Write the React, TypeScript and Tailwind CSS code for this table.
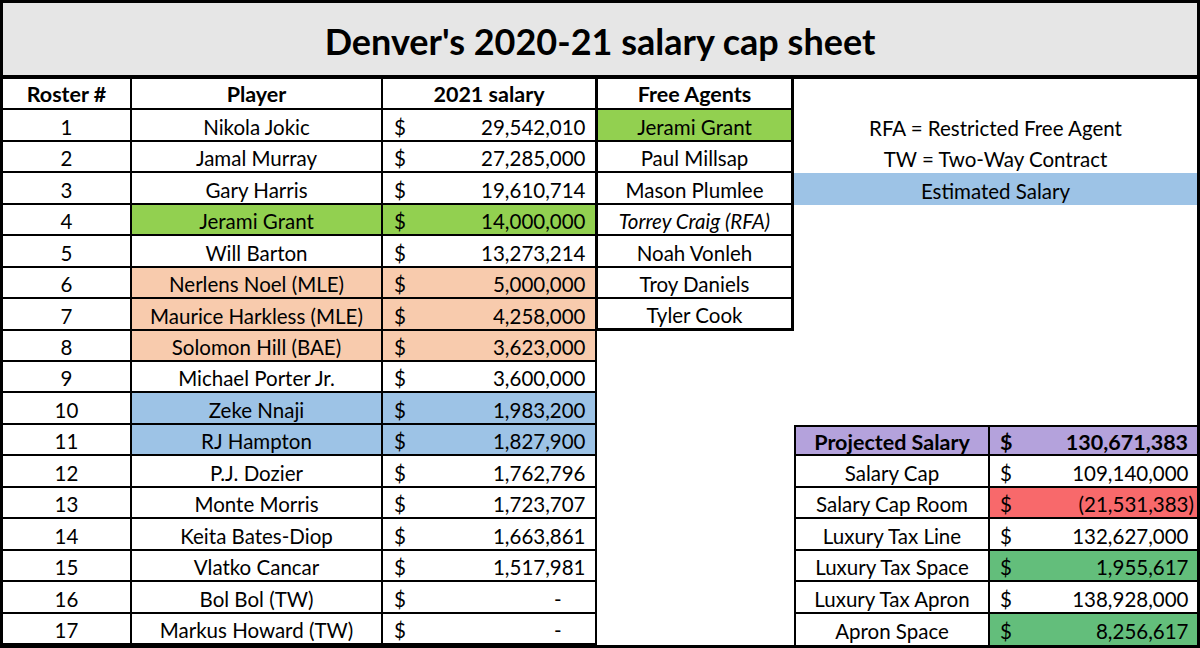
import React from "react";

const FONT = { fontFamily: "Lato, 'Open Sans', 'Liberation Sans', sans-serif" };

type Row = { n: number; name: string; sal: string; bg?: string };

const rows: Row[] = [
  { n: 1, name: "Nikola Jokic", sal: "29,542,010" },
  { n: 2, name: "Jamal Murray", sal: "27,285,000" },
  { n: 3, name: "Gary Harris", sal: "19,610,714" },
  { n: 4, name: "Jerami Grant", sal: "14,000,000", bg: "bg-[#92d050]" },
  { n: 5, name: "Will Barton", sal: "13,273,214" },
  { n: 6, name: "Nerlens Noel (MLE)", sal: "5,000,000", bg: "bg-[#f8cbad]" },
  { n: 7, name: "Maurice Harkless (MLE)", sal: "4,258,000", bg: "bg-[#f8cbad]" },
  { n: 8, name: "Solomon Hill (BAE)", sal: "3,623,000", bg: "bg-[#f8cbad]" },
  { n: 9, name: "Michael Porter Jr.", sal: "3,600,000" },
  { n: 10, name: "Zeke Nnaji", sal: "1,983,200", bg: "bg-[#9dc3e6]" },
  { n: 11, name: "RJ Hampton", sal: "1,827,900", bg: "bg-[#9dc3e6]" },
  { n: 12, name: "P.J. Dozier", sal: "1,762,796" },
  { n: 13, name: "Monte Morris", sal: "1,723,707" },
  { n: 14, name: "Keita Bates-Diop", sal: "1,663,861" },
  { n: 15, name: "Vlatko Cancar", sal: "1,517,981" },
  { n: 16, name: "Bol Bol (TW)", sal: "-" },
  { n: 17, name: "Markus Howard (TW)", sal: "-" },
];

const fa: { name: string; bg?: string; italic?: boolean }[] = [
  { name: "Jerami Grant", bg: "bg-[#92d050]" },
  { name: "Paul Millsap" },
  { name: "Mason Plumlee" },
  { name: "Torrey Craig (RFA)", italic: true },
  { name: "Noah Vonleh" },
  { name: "Troy Daniels" },
  { name: "Tyler Cook" },
];

const summary: { label: string; val: string; labelBg?: string; valBg?: string; bold?: boolean }[] = [
  { label: "Projected Salary", val: "130,671,383", labelBg: "bg-[#b4a2dc]", valBg: "bg-[#b4a2dc]", bold: true },
  { label: "Salary Cap", val: "109,140,000" },
  { label: "Salary Cap Room", val: "(21,531,383)", valBg: "bg-[#f8696b]" },
  { label: "Luxury Tax Line", val: "132,627,000" },
  { label: "Luxury Tax Space", val: "1,955,617", valBg: "bg-[#63be7b]" },
  { label: "Luxury Tax Apron", val: "138,928,000" },
  { label: "Apron Space", val: "8,256,617", valBg: "bg-[#63be7b]" },
];

function Money({ v }: { v: string }) {
  if (v === "-") {
    return (
      <span className="flex-1 text-right">
        -<span className="invisible">00)</span>
      </span>
    );
  }
  const neg = v.endsWith(")");
  return (
    <span className="flex-1 text-right">
      {v}
      {!neg && <span className="invisible">)</span>}
    </span>
  );
}

export default function App() {
  return (
    <div
      className="w-[1200px] h-[648px] bg-white text-black border-[3px] border-black flex flex-col overflow-hidden"
      style={FONT}
    >
      <div className="h-[76px] shrink-0 bg-[#e6e6e6] border-b-[4px] border-black flex items-center justify-center">
        <span className="text-[36px] font-bold leading-none pt-[3px]">Denver's 2020-21 salary cap sheet</span>
      </div>
      <div className="flex flex-1 text-[20.5px] leading-none">
        {/* Main roster table */}
        <div className="w-[594px] grid grid-cols-[129px_251px_214px] grid-rows-[repeat(18,minmax(0,1fr))]">
          <div className="border-r-2 border-b-2 border-black flex items-center justify-center font-bold text-[21.5px] pt-[2px]">Roster #</div>
          <div className="border-r-2 border-b-2 border-black flex items-center justify-center font-bold text-[21.5px] pt-[2px]">Player</div>
          <div className="border-r-2 border-b-2 border-black flex items-center justify-center font-bold text-[21.5px] pt-[2px]">2021 salary</div>
          {rows.map((r) => (
            <React.Fragment key={r.n}>
              <div className="border-r-2 border-b-2 border-black flex items-center justify-center pt-[4px]">{r.n}</div>
              <div className={`border-r-2 border-b-2 border-black flex items-center justify-center pt-[4px] ${r.bg ?? ""}`}>
                {r.name}
              </div>
              <div className={`border-r-2 border-b-2 border-black flex items-center pl-[11px] pr-[4px] pt-[4px] ${r.bg ?? ""}`}>
                <span>$</span>
                <Money v={r.sal} />
              </div>
            </React.Fragment>
          ))}
        </div>
        {/* Free agents */}
        <div className="w-[197px] grid grid-rows-[repeat(18,minmax(0,1fr))]">
          <div className="border-l border-r-[3px] border-b-2 border-black flex items-center justify-center font-bold text-[21.5px] pt-[2px]">
            Free Agents
          </div>
          {fa.map((f, i) => (
            <div
              key={f.name}
              className={`border-l border-r-[3px] border-black flex items-center justify-center pt-[4px] ${
                i === fa.length - 1 ? "border-b-[3px]" : "border-b-2"
              } ${f.bg ?? ""} ${f.italic ? "italic" : ""}`}
            >
              {f.name}
            </div>
          ))}
        </div>
        {/* Right panel */}
        <div className="flex-1 grid grid-cols-[196px_1fr] grid-rows-[repeat(18,minmax(0,1fr))]">
          <div className="col-span-2" />
          <div className="col-span-2 flex items-center justify-center pt-[4px]">RFA = Restricted Free Agent</div>
          <div className="col-span-2 flex items-center justify-center pt-[4px]">TW = Two-Way Contract</div>
          <div className="col-span-2 flex items-center justify-center pt-[4px] bg-[#9dc3e6]">Estimated Salary</div>
          <div className="col-span-2" />
          <div className="col-span-2" />
          <div className="col-span-2" />
          <div className="col-span-2" />
          <div className="col-span-2" />
          <div className="col-span-2" />
          <div className="col-span-2" />
          {summary.map((s, i) => (
            <React.Fragment key={s.label}>
              <div
                className={`border-l-2 border-r-2 border-black flex items-center justify-center pt-[4px] ${
                  i === 0 ? "border-t-2" : ""
                } ${i === summary.length - 1 ? "" : "border-b-2"} ${s.labelBg ?? ""} ${
                  s.bold ? "font-bold text-[21.5px]" : ""
                }`}
              >
                {s.label}
              </div>
              <div
                className={`border-black flex items-center pl-[10px] pr-[3px] pt-[4px] ${i === 0 ? "border-t-2" : ""} ${
                  i === summary.length - 1 ? "" : "border-b-2"
                } ${s.valBg ?? ""} ${s.bold ? "font-bold text-[21.5px]" : ""}`}
              >
                <span>$</span>
                <Money v={s.val} />
              </div>
            </React.Fragment>
          ))}
        </div>
      </div>
    </div>
  );
}
